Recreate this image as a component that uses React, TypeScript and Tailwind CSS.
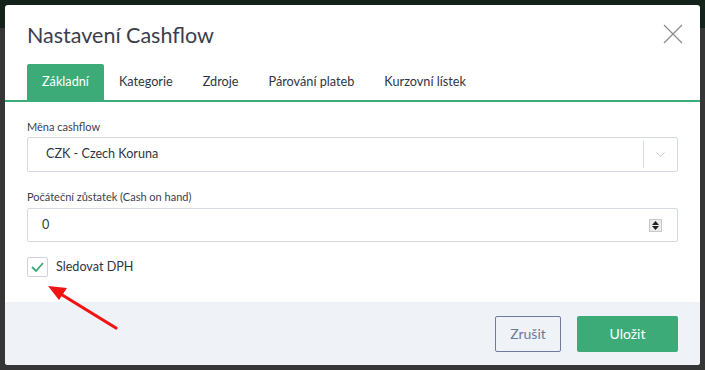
import React from 'react';

const tabs = ['Základní', 'Kategorie', 'Zdroje', 'Párování plateb', 'Kurzovní lístek'];

export default function App() {
  return (
    <div className="h-[370px] w-[705px] overflow-hidden bg-[linear-gradient(#15241b_0_28px,#363636_28px)] pt-[5px] pl-[5px] font-['Lato','Liberation_Sans',sans-serif]">
      <div className="relative flex h-[360px] w-[695px] flex-col overflow-hidden rounded-[3px] bg-white">
        {/* Header */}
        <div className="flex items-start justify-between pl-[22px] pr-[16px] pt-[16px]">
          <h2 className="text-[21.5px] leading-[28px] text-[#3a3d4d]">Nastavení Cashflow</h2>
          <button className="mt-[2px] p-0">
            <svg width="22" height="22" viewBox="0 0 22 22" className="text-[#8a8a8a]">
              <path d="M2 2 L20 20 M20 2 L2 20" stroke="currentColor" strokeWidth="1.2" />
            </svg>
          </button>
        </div>

        {/* Tabs */}
        <div className="mt-[15px] flex border-b-2 border-[#3dab78] pl-[22px]">
          {tabs.map((t, i) => (
            <div
              key={t}
              className={`flex h-[36px] items-center px-[15px] text-[12.7px] ${
                i === 0 ? 'rounded-t-[2px] bg-[#3dab78] text-white' : 'text-[#2e3645]'
              }`}
            >
              {t}
            </div>
          ))}
        </div>

        {/* Body */}
        <div className="flex flex-1 flex-col px-[22px] pt-[18px]">
          <label className="text-[11px] leading-[14px] text-[#3a4150]">Měna cashflow</label>
          <div className="mt-[3px] flex h-[35px] w-[651px] items-center rounded-[2px] border border-[#d5d9e2]">
            <span className="flex-1 pl-[18px] text-[12.6px] text-[#2e3645]">CZK - Czech Koruna</span>
            <div className="h-[27px] w-px bg-[#d5d9e2]" />
            <div className="flex w-[33px] justify-center">
              <svg width="9" height="6" viewBox="0 0 9 6">
                <path d="M0.5 0.5 L4.5 4.5 L8.5 0.5" stroke="#c3c8d2" strokeWidth="1" fill="none" />
              </svg>
            </div>
          </div>

          <label className="mt-[18px] text-[11px] leading-[14px] text-[#3a4150]">Počáteční zůstatek (Cash on hand)</label>
          <div className="mt-[4px] flex h-[34px] w-[651px] items-center rounded-[2px] border border-[#d5d9e2]">
            <span className="flex-1 pl-[14px] text-[12.6px] text-[#2e3645]">0</span>
            <div className="mr-[15px] flex h-[13px] w-[13px] flex-col items-center justify-center gap-[1px] border border-[#c8c8c8] bg-[#ececec]">
              <svg width="7" height="4" viewBox="0 0 7 4"><path d="M3.5 0 L7 4 L0 4 Z" fill="#222" /></svg>
              <svg width="7" height="4" viewBox="0 0 7 4"><path d="M0 0 L7 0 L3.5 4 Z" fill="#222" /></svg>
            </div>
          </div>

          <div className="mt-[15px] flex items-center">
            <div className="flex h-[20px] w-[21px] items-center justify-center rounded-[2px] border border-[#cfd4dc]">
              <svg width="13" height="10" viewBox="0 0 13 10">
                <path d="M1 5 L5 9 L12 1" stroke="#3dab78" strokeWidth="1.8" fill="none" />
              </svg>
            </div>
            <span className="ml-[8px] text-[12.6px] text-[#2e3645]">Sledovat DPH</span>
          </div>
        </div>

        {/* Footer */}
        <div className="flex h-[63px] items-center justify-end gap-[16px] bg-[#eff2f7] pr-[22px]">
          <button className="h-[36px] w-[66px] rounded-[2px] border border-[#6d7c9c] text-[14px] text-[#6b7a99]">Zrušit</button>
          <button className="h-[36px] w-[101px] rounded-[2px] bg-[#3dab78] text-[14px] text-white">Uložit</button>
        </div>

        {/* Annotation arrow */}
        <svg className="pointer-events-none absolute left-0 top-0" width="695" height="360" viewBox="0 0 695 360">
          <line x1="111" y1="323" x2="54" y2="288" stroke="#f01414" strokeWidth="3.2" strokeLinecap="round" />
          <path d="M43 281 L62 283 L54 295 Z" fill="#f01414" />
        </svg>
      </div>
    </div>
  );
}
